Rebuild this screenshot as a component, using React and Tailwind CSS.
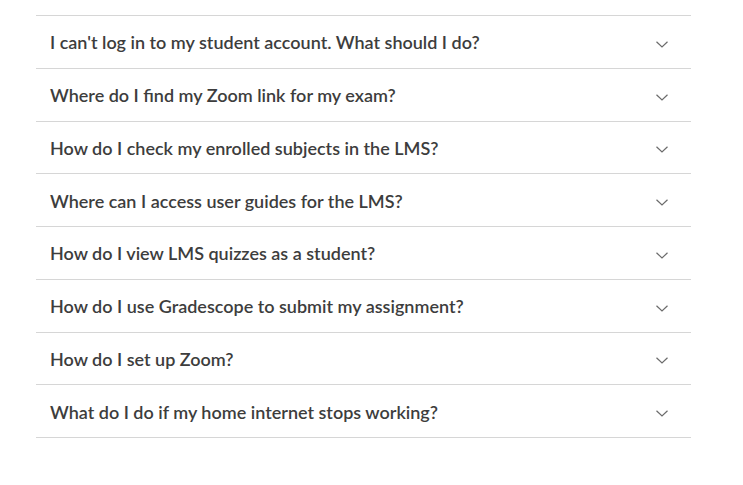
import React, { useState } from 'react'

const preguntas = [
  "I can't log in to my student account. What should I do?",
  'Where do I find my Zoom link for my exam?',
  'How do I check my enrolled subjects in the LMS?',
  'Where can I access user guides for the LMS?',
  'How do I view LMS quizzes as a student?',
  'How do I use Gradescope to submit my assignment?',
  'How do I set up Zoom?',
  'What do I do if my home internet stops working?',
]

function Chevron({ open }) {
  return (
    <svg width="12" height="7" viewBox="0 0 12 7" fill="none" className={open ? 'rotate-180' : ''}>
      <path d="M0.5 0.8 L6 6 L11.5 0.8" stroke="#6b6b6b" strokeWidth="1.2" />
    </svg>
  )
}

export default function App() {
  const [abierto, setAbierto] = useState(null)

  return (
    <div className="min-h-screen bg-white pt-[15px] pl-[36px] w-[743px]" style={{ fontFamily: '"Lato", "Open Sans", sans-serif' }}>
      <div className="w-[655px] border-b border-[#d6d6d6]">
        {preguntas.map((p, i) => (
          <button
            key={i}
            onClick={() => setAbierto(abierto === i ? null : i)}
            className="w-full h-[52.75px] border-t border-[#d6d6d6] flex items-center justify-between pl-[14px] pr-[23px] text-left"
          >
            <span className="text-[18px] font-semibold text-[#3d3d3d] mt-[2px]">{p}</span>
            <span className="mt-[5px]"><Chevron open={abierto === i} /></span>
          </button>
        ))}
      </div>
    </div>
  )
}
